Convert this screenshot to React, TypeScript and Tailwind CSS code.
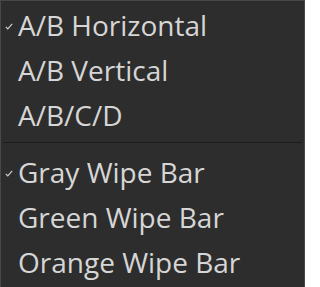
const groups = [
  [
    { label: "A/B Horizontal", checked: true },
    { label: "A/B Vertical", checked: false },
    { label: "A/B/C/D", checked: false },
  ],
  [
    { label: "Gray Wipe Bar", checked: true },
    { label: "Green Wipe Bar", checked: false },
    { label: "Orange Wipe Bar", checked: false },
  ],
];

function Check() {
  return (
    <svg width="8" height="7" viewBox="0 0 8 7" className="absolute left-[4px] top-[20px]">
      <path d="M0.8 3.8 L2.8 5.8 L7.2 0.8" fill="none" stroke="#cfcfcf" strokeWidth="1.2" />
    </svg>
  );
}

export default function App() {
  return (
    <div
      className="w-[305px] h-[287px] bg-[#2d2d2d] border border-b-0 border-[#484848] overflow-hidden pt-[2px] text-[#d6d6d6]"
      style={{ fontFamily: '"Open Sans", "Noto Sans", sans-serif' }}
    >
      {groups.map((items, gi) => (
        <div key={gi}>
          {gi > 0 && <div className="mx-[2px] mt-[4px] mb-[7px] border-t border-[#1c1c1c]" />}
          {items.map((item) => (
            <div key={item.label} className="relative h-[45px] pl-[17px] text-[28px] leading-[45px]">
              {item.checked && <Check />}
              {item.label}
            </div>
          ))}
        </div>
      ))}
    </div>
  );
}
